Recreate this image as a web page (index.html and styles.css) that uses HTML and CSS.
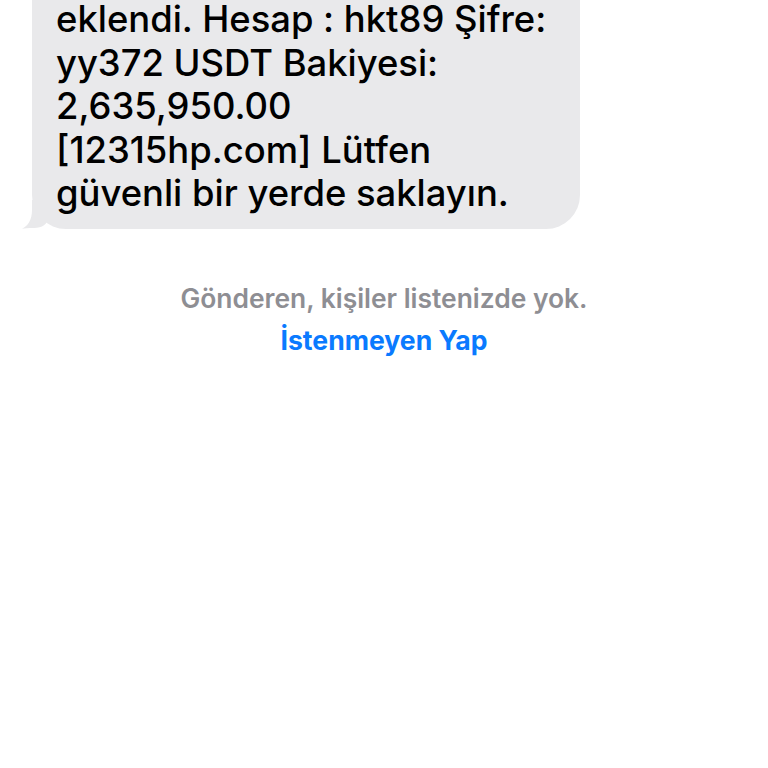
FILE: index.html
```html
<!DOCTYPE html>
<html lang="tr">
<head>
<meta charset="utf-8">
<link rel="stylesheet" href="styles.css">
</head>
<body>
<div class="thread">
  <div class="bubble">
    <p class="msg">eklendi. Hesap : hkt89 Şifre:<br>yy372 USDT Bakiyesi:<br>2,635,950.00<br>[12315hp.com] Lütfen<br>güvenli bir yerde saklayın.</p>
    <svg class="tail" width="30" height="30" viewBox="0 0 30 30"><path d="M26 0 L26 18 C26 24 20 28 12 28 C6 28 2 28.5 0 28.8 C6 26 10 20 10 10 L10 0 Z" fill="#e9e9eb"/></svg>
  </div>
  <div class="notice">
    <p class="notice-text">Gönderen, kişiler listenizde yok.</p>
    <p class="notice-link">İstenmeyen Yap</p>
  </div>
</div>
</body>
</html>
```
FILE: styles.css
```css
html, body {
  margin: 0;
  padding: 0;
  background: #ffffff;
}
.thread {
  width: 768px;
  height: 768px;
  overflow: hidden;
  font-family: Inter, "Liberation Sans", sans-serif;
}
.bubble {
  position: relative;
  margin-left: 32px;
  width: 548px;
  box-sizing: border-box;
  padding: 0 0 13px 24px;
  background: #e9e9eb;
  border-radius: 0 0 34px 34px;
}
.msg {
  margin: -2px 0 0 0;
  font-size: 36.4px;
  line-height: 43.5px;
  font-weight: 500;
  color: #000000;
}
.tail {
  position: absolute;
  left: -10px;
  bottom: -1px;
}
.notice {
  text-align: center;
  padding-top: 54px;
}
.notice-text {
  margin: 0;
  font-size: 26.4px;
  line-height: 30px;
  font-weight: 600;
  color: #8e8e93;
}
.notice-link {
  margin: 12px 0 0 0;
  font-size: 26.6px;
  line-height: 30px;
  font-weight: 700;
  color: #0a7aff;
}
```
